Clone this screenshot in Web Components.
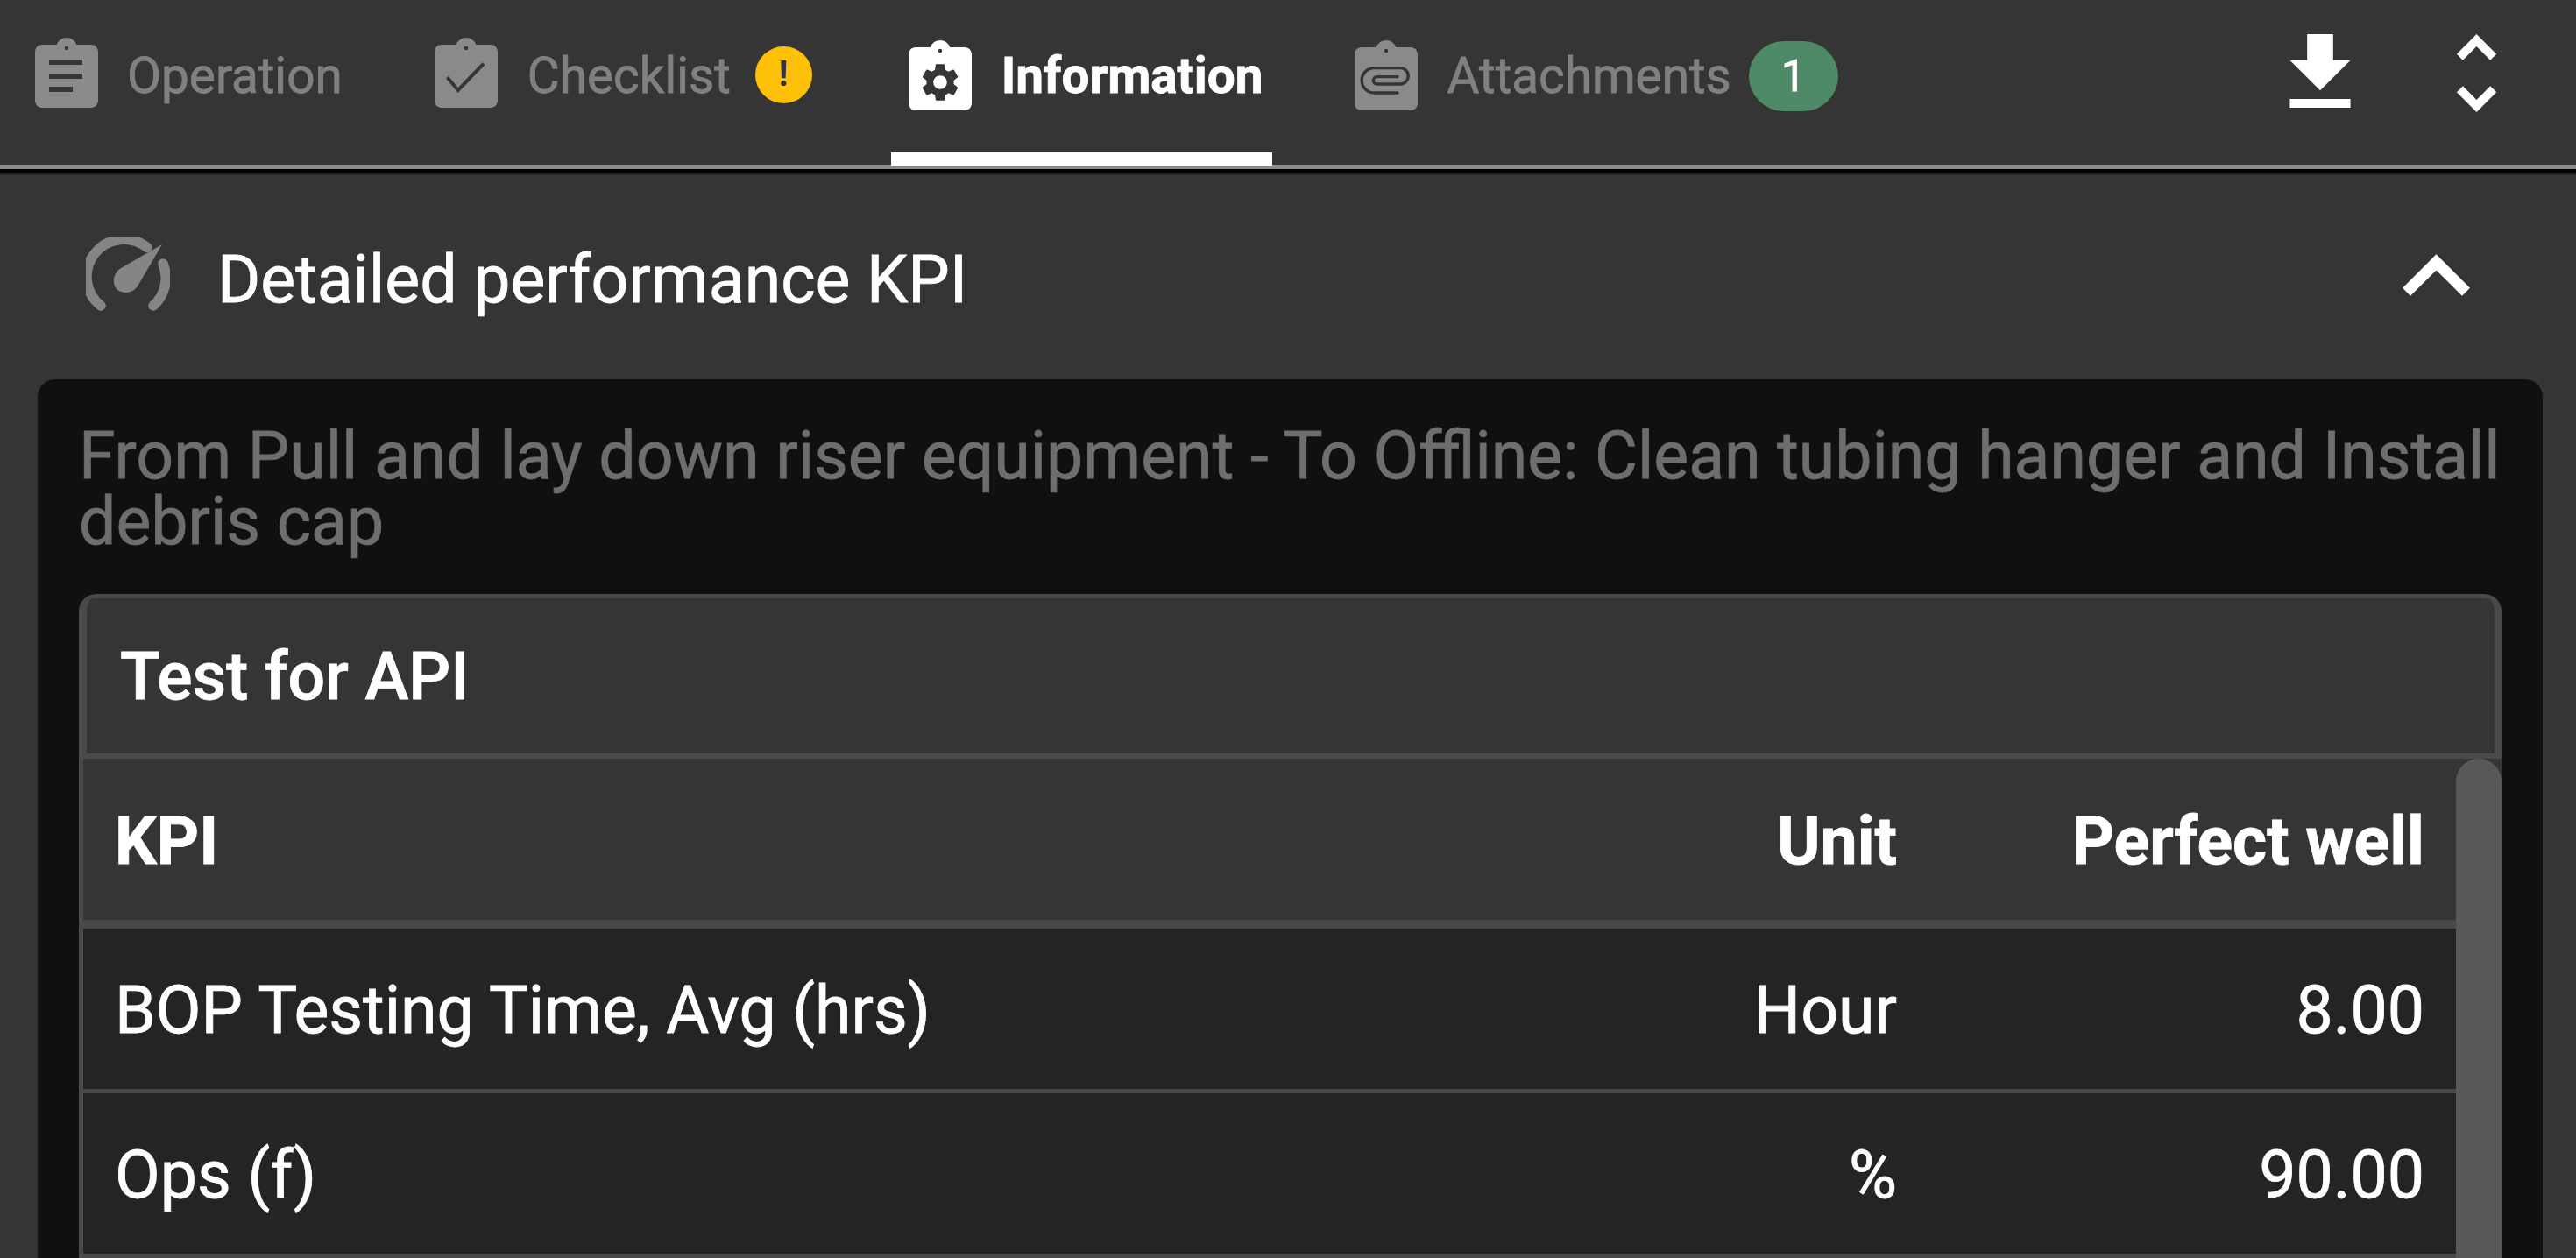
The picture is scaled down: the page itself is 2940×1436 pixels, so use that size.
<!DOCTYPE html>
<html lang="en"><head><meta charset="utf-8"><title>KPI</title>
<style>
html,body{margin:0;height:1436px;overflow:hidden;background:#353535;font-family:Roboto,"Liberation Sans",sans-serif;color:#fff}
</style></head><body>
<kpi-app>
  <tab-bar slot="tabs">
    <tab-item icon="list" gap="33" style="margin-left:18px">Operation</tab-item>
    <tab-item icon="check" gap="34" style="margin-left:61px">Checklist<alert-badge slot="badge">!</alert-badge></tab-item>
    <tab-item icon="gear" gap="34" active style="margin-left:68px">Information</tab-item>
    <tab-item icon="clip" gap="34" style="margin-left:72px">Attachments<count-badge slot="badge">1</count-badge></tab-item>
  </tab-bar>
  <kpi-section title-text="Detailed performance KPI">
    <kpi-card note="From Pull and lay down riser equipment - To Offline: Clean tubing hanger and Install debris cap">
      <kpi-panel heading="Test for API">
        <kpi-row head><span>KPI</span><span>Unit</span><span>Perfect well</span></kpi-row>
        <kpi-row><span>BOP Testing Time, Avg (hrs)</span><span>Hour</span><span>8.00</span></kpi-row>
        <kpi-row><span>Ops (f)</span><span>%</span><span>90.00</span></kpi-row>
      </kpi-panel>
    </kpi-card>
  </kpi-section>
</kpi-app>
<script>
const def=(name,html)=>customElements.define(name,class extends HTMLElement{
  constructor(){super();this.attachShadow({mode:'open'});if(typeof html!=='function')this.shadowRoot.innerHTML=html;}
  connectedCallback(){if(typeof html==='function'&&!this._d){this._d=1;this.shadowRoot.innerHTML=html(this);}}
});
const BODY="M19 3h-4.18C14.4 1.84 13.3 1 12 1s-2.4.84-2.82 2H5c-1.1 0-2 .9-2 2v14c0 1.1.9 2 2 2h14c1.1 0 2-.9 2-2V5c0-1.1-.9-2-2-2z";
const HOLE='<circle cx="12" cy="4" r=".55" fill="#353535"/>';
const GEAR="M19.14 12.94c.04-.3.06-.61.06-.94 0-.32-.02-.64-.07-.94l2.03-1.58c.18-.14.23-.41.12-.61l-1.92-3.32c-.12-.22-.37-.29-.59-.22l-2.39.96c-.5-.38-1.03-.7-1.62-.94l-.36-2.54c-.04-.24-.24-.41-.48-.41h-3.84c-.24 0-.43.17-.47.41l-.36 2.54c-.59.24-1.13.57-1.62.94l-2.39-.96c-.22-.08-.47 0-.59.22L2.74 8.87c-.12.21-.08.47.12.61l2.03 1.58c-.05.3-.09.63-.09.94s.02.64.07.94l-2.03 1.58c-.18.14-.23.41-.12.61l1.92 3.32c.12.22.37.29.59.22l2.39-.96c.5.38 1.03.7 1.62.94l.36 2.54c.05.24.24.41.48.41h3.84c.24 0 .44-.17.47-.41l.36-2.54c.59-.24 1.13-.56 1.62-.94l2.39.96c.22.08.47 0 .59-.22l1.92-3.32c.12-.22.07-.47-.12-.61l-2.01-1.58zM12 15.6c-1.98 0-3.6-1.62-3.6-3.6s1.62-3.6 3.6-3.6 3.6 1.62 3.6 3.6-1.62 3.6-3.6 3.6z";
const ICONS={
 list:'<path d="M7 7.25h9.500v1.500H7zM7 11.250h9.500v1.500H7zM7 15h6.750v1.500H7z" fill="#353535"/>',
 check:'<path d="M6.600 12.300l3.100 3.700L17 8.400" fill="none" stroke="#353535" stroke-width="1"/>',
 gear:'<svg x="6.600" y="7.300" width="10.800" height="11.400" viewBox="2 2 20 20"><path d="'+GEAR+'" fill="#353535"/></svg>',
 clip:'<path d="M15.250 16H8.600a3.550 3.550 0 0 1 0-7.100H16a2.300 2.300 0 0 1 0 4.600H9.400a1.050 1.050 0 0 1 0-2.100h5.850" fill="none" stroke="#353535" stroke-width=".85" stroke-linecap="round"/>'
};
def('kpi-app',`<style>:host{display:flex;flex-direction:column;width:2940px;height:1436px;overflow:hidden;background:#353535;filter:blur(.6px);-webkit-text-stroke-width:.8px}</style><slot name="tabs"></slot><slot></slot>`);
def('tab-bar',`<style>:host{display:block;position:relative}
.bar{display:flex;align-items:stretch;height:188px}
.tabs{display:flex;align-items:stretch;flex:1}
.act{display:flex;align-items:flex-start;padding-top:39px}
.rule{height:5px;background:#8a8a8a}.shadow{height:7px;background:linear-gradient(#000 60%,#353535)}
svg{display:block;fill:#fff}
.dl{margin-right:120px;width:70px;height:84px}.ex{margin-right:90px;width:47px;height:89px}</style>
<div class="bar"><div class="tabs"><slot></slot></div>
<div class="act"><svg class="dl" viewBox="5 3 14 17"><path d="M19 9h-4V3H9v6H5l7 7 7-7zM5 18v2h14v-2H5z"/></svg>
<svg class="ex" viewBox="7.41 3 9.17 18"><path d="M12 5.830L15.170 9l1.410-1.410L12 3 7.410 7.590 8.830 9 12 5.830zm0 12.340L8.830 15l-1.410 1.410L12 21l4.590-4.590L15.170 15 12 18.170z"/></svg></div></div>
<div class="rule"></div><div class="shadow"></div>`);
def('tab-item',h=>{const a=h.hasAttribute('active');const ic=h.getAttribute('icon')||'list';const c=a?'#fff':'#8a8a8a';const low=ic==='gear'||ic==='clip';
return `<style>:host{display:flex;align-items:flex-start;height:189px;box-sizing:border-box;padding:0 ${a?10:22}px 0 ${a?20:22}px;margin-bottom:-1px;${a?'border-bottom:15px solid #fff;':''}}
.in{display:flex;align-items:center;height:172px;gap:${h.getAttribute('gap')||36}px}
svg.o{display:block;width:72px;height:80px;flex:none;margin-top:${low?-1:-7}px}
.t{font-size:56.700px;line-height:64px;font-weight:${a?700:400};color:${a?'#fff':'#808080'};margin-top:1px;white-space:nowrap}
::slotted(*){margin-left:-${ic==='check'?6:14}px}</style>
<div class="in"><svg class="o" viewBox="3 1 18 20"><path d="${BODY}" fill="${c}"/>${HOLE}${ICONS[ic]}</svg><span class="t"><slot></slot></span><slot name="badge"></slot></div>`});
def('alert-badge',`<style>:host{display:flex;align-items:center;justify-content:center;width:65px;height:65px;border-radius:50%;background:#ffc107;color:#353535;font:700 40px/1 Roboto,sans-serif;-webkit-text-stroke-width:0;margin-top:-2px}</style><slot></slot>`);
def('count-badge',`<style>:host{display:flex;align-items:center;justify-content:center;width:102px;height:80px;border-radius:40px;background:#4e8a68;color:#fff;font:400 50px/1 Roboto,sans-serif;margin-top:2px}</style><slot></slot>`);
def('kpi-section',h=>`<style>:host{display:block}
.head{display:flex;align-items:center;height:233px;padding:0 78px 0 98px;box-sizing:border-box}
.g{width:96px;height:86px;flex:none;display:block;margin-right:54px;margin-top:-5px}
.h{flex:1;font-size:75.200px;line-height:80px;color:#fff;margin-top:5px}
.c{width:77px;height:48px;display:block;fill:#fff;margin-right:43px;margin-top:-5px}
.body{padding:0 38px 0 43px}</style>
<div class="head"><svg class="g" viewBox="0 0 96 86" fill="none"><path d="M17 78A42.500 42.500 0 0 1 70 11.500" stroke="#858585" stroke-width="11.500" stroke-linecap="round"/><path d="M88 30A42.500 42.500 0 0 1 77 78" stroke="#858585" stroke-width="11.500" stroke-linecap="round"/><path d="M87 8L41 34.500C29 41 29 58 40 62C49 65 56 61 60 54Z" fill="#858585"/></svg>
<div class="h">${h.getAttribute('title-text')||''}</div>
<svg class="c" viewBox="6 8 12 7.410"><path d="M12 8l-6 6 1.410 1.410L12 10.830l4.590 4.580L18 14z"/></svg></div>
<div class="body"><slot></slot></div>`);
def('kpi-card',h=>`<style>:host{display:block;background:#101010;border-radius:20px 20px 0 0;padding:50px 47px 0;height:1003px;box-sizing:border-box}
.n{font-size:75.200px;line-height:75px;color:#6e6e6e;margin:0 0 45px}</style>
<p class="n">${h.getAttribute('note')||''}</p><slot></slot>`);
def('kpi-panel',h=>`<style>:host{display:block;border:solid #4a4a4a;border-width:5px 0 0 0;border-radius:20px 20px 0 0;background:#353535;overflow:hidden}
.t{height:183px;box-sizing:border-box;border:solid #4a4a4a;border-width:0 8px 6px 9px;border-top-left-radius:16px;border-top-right-radius:16px;padding-left:38px;font-size:75.200px;font-weight:500;line-height:178px;color:#fff}
.wrap{display:flex;border-left:5px solid #4a4a4a}
.rows{flex:1;min-width:0}
.sb{width:52px;flex:none;background:#585858;border-radius:26px 26px 0 0}</style>
<div class="t">${h.getAttribute('heading')||''}</div>
<div class="wrap"><div class="rows"><slot></slot></div><div class="sb"></div></div>`);
def('kpi-row',h=>{const hd=h.hasAttribute('head');return `<style>:host{display:block;height:${hd?194:188}px;box-sizing:border-box;background:${hd?'#353535':'#242424'};border-bottom:${hd?10:5}px solid #484848}
.g{display:grid;grid-template-columns:1fr 340px 602px;align-items:center;height:100%;box-sizing:border-box;padding:3px 36px 0 36px;font-size:75.200px;font-weight:${hd?700:400};color:#fff}
::slotted(span:nth-child(n+2)){text-align:right}
::slotted(span){white-space:nowrap}</style><div class="g"><slot></slot></div>`});
</script>
</body></html>
